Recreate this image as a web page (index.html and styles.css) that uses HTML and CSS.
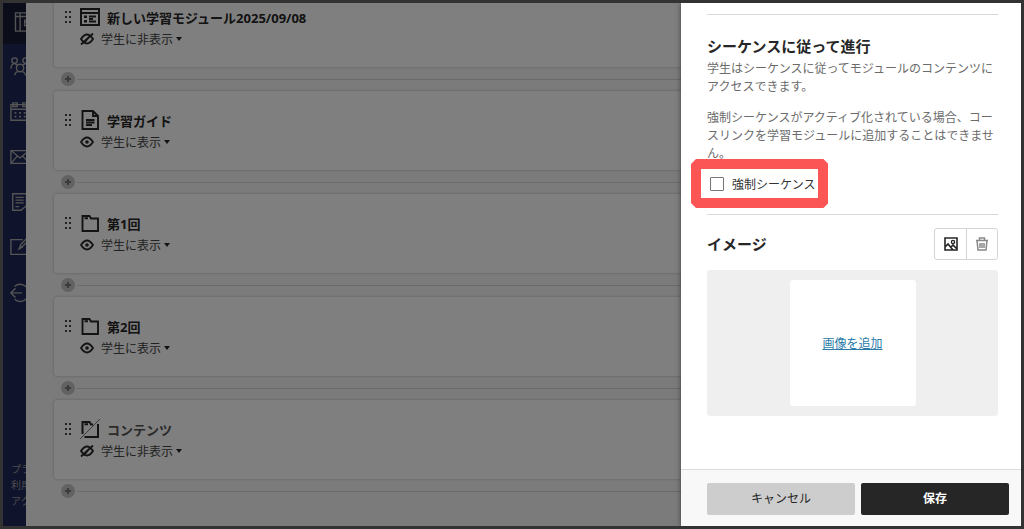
FILE: index.html
```html
<!DOCTYPE html>
<html lang="ja">
	<head>
		<meta charset="utf-8">
		<title>学習モジュール</title>
		<link rel="stylesheet" href="styles.css">
	</head>
	<body>
		<svg class="symbols" aria-hidden="true">
			<symbol id="drag" viewBox="0 0 8 14">
				<path d="M1 1h2v2H1zM5 1h2v2H5zM1 6h2v2H1zM5 6h2v2H5zM1 11h2v2H1zM5 11h2v2H5z" fill="currentColor"/>
			</symbol>
			<symbol id="module" viewBox="0 0 20 20">
				<path d="M1 2h18v16H1zM1 6h18M9 9.500h7M9 12h4M9 14.500h7" fill="none" stroke="currentColor" stroke-width="2"/>
				<path d="M4 8.500h3v2.500H4zM4 13h3v2.500H4z" fill="currentColor"/>
			</symbol>
			<symbol id="document" viewBox="0 0 20 20">
				<path d="M2.500 1h10.500l5 5v13H2.500zM13 1v5h5M6 10h8.500M6 12.500h8.500M6 15h6" fill="none" stroke="currentColor" stroke-width="1.900"/>
			</symbol>
			<symbol id="folder" viewBox="0 0 20 20">
				<path d="M2.500 18V3h7l1.500 2.500h7V18zM4.500 5.300h3.500" fill="none" stroke="currentColor" stroke-width="1.900"/>
			</symbol>
			<symbol id="folder-off" viewBox="0 0 20 20">
				<path d="M2.500 15V3h7l1.500 2.500h2M18 5v13H4.500M4.500 5.300h3.500" fill="none" stroke="currentColor" stroke-width="2"/>
				<path d="M0 20L20 0" stroke="currentColor" stroke-width="1" opacity=".6"/>
			</symbol>
			<symbol id="eye" viewBox="0 0 14 12">
				<path d="M1 6q6-9 12 0q-6 9-12 0z" fill="none" stroke="currentColor" stroke-width="1.800"/>
				<circle cx="7" cy="6" r="1.800" fill="currentColor"/>
			</symbol>
			<symbol id="eye-off" viewBox="0 0 14 12">
				<path d="M1 6q6-9 12 0q-6 9-12 0zM1 11.500L13 .5M5 9l4-5" fill="none" stroke="currentColor" stroke-width="1.900"/>
			</symbol>
		</svg>

		<div class="app">
			<nav class="sidebar">
				<a class="nav-item active" href="#" aria-label="コース">
					<svg viewBox="0 0 24 24"><path d="M6 2h18v20H6zM11 2v20M6 6h18M24 10h-8v6h8M16 12h3"/></svg>
				</a>
				<a class="nav-item" href="#" aria-label="グループ">
					<svg viewBox="0 0 24 24"><circle cx="5" cy="5" r="3"/><circle cx="17" cy="5" r="3"/><circle cx="11" cy="13" r="4"/><path d="M1 14q0-5 4-6l3 2M21 14q0-5-4-6l-3 2M5 21q1-4 4-4h4q3 0 4 4"/></svg>
				</a>
				<a class="nav-item" href="#" aria-label="カレンダー">
					<svg viewBox="0 0 24 24"><path d="M1 4h20v17H1zM1 9h20M3 2h5v4H3zM14 2h5v4h-5z"/><path d="M5 13h16M5 17h16" stroke-width="2" stroke-dasharray="2 3"/></svg>
				</a>
				<a class="nav-item" href="#" aria-label="メッセージ">
					<svg viewBox="0 0 24 24"><path d="M1 5h20v14H1zM1 5l10 8 10-8M1 19l7-8M21 19l-7-8"/></svg>
				</a>
				<a class="nav-item" href="#" aria-label="成績">
					<svg viewBox="0 0 24 24"><path d="M18 16V3H3v18h10M6 7h9M6 10h9M6 13h9M6 17h4M12 21l6-5"/></svg>
				</a>
				<a class="nav-item" href="#" aria-label="ツール">
					<svg viewBox="0 0 24 24"><path d="M14 4H1v16h18v-9M10 14l2-5 8-8 2 2-8 8zM10 14l4-2"/></svg>
				</a>
				<a class="nav-item" href="#" aria-label="サインアウト">
					<svg viewBox="0 0 24 24"><path d="M1 13h12M6 8l-5 5 5 5M5 6a9 9 0 0 1 15 6M5 20a9 9 0 0 0 15-6"/></svg>
				</a>
				<div class="nav-links">
					<a href="#">プラ</a>
					<a href="#">利用</a>
					<a href="#">アク</a>
				</div>
			</nav>

			<main class="content">
				<article class="card">
					<div class="card-head">
						<svg class="drag"><use href="#drag"/></svg>
						<svg class="type"><use href="#module"/></svg>
						<a class="card-title" href="#">新しい学習モジュール2025/09/08</a>
					</div>
					<button class="visibility" type="button"><svg><use href="#eye-off"/></svg>学生に非表示<span class="caret"></span></button>
				</article>
				<div class="insert"><button type="button" aria-label="追加"></button></div>

				<article class="card">
					<div class="card-head">
						<svg class="drag"><use href="#drag"/></svg>
						<svg class="type"><use href="#document"/></svg>
						<a class="card-title" href="#">学習ガイド</a>
					</div>
					<button class="visibility" type="button"><svg><use href="#eye"/></svg>学生に表示<span class="caret"></span></button>
				</article>
				<div class="insert"><button type="button" aria-label="追加"></button></div>

				<article class="card">
					<div class="card-head">
						<svg class="drag"><use href="#drag"/></svg>
						<svg class="type"><use href="#folder"/></svg>
						<a class="card-title" href="#">第1回</a>
					</div>
					<button class="visibility" type="button"><svg><use href="#eye"/></svg>学生に表示<span class="caret"></span></button>
				</article>
				<div class="insert"><button type="button" aria-label="追加"></button></div>

				<article class="card">
					<div class="card-head">
						<svg class="drag"><use href="#drag"/></svg>
						<svg class="type"><use href="#folder"/></svg>
						<a class="card-title" href="#">第2回</a>
					</div>
					<button class="visibility" type="button"><svg><use href="#eye"/></svg>学生に表示<span class="caret"></span></button>
				</article>
				<div class="insert"><button type="button" aria-label="追加"></button></div>

				<article class="card">
					<div class="card-head">
						<svg class="drag"><use href="#drag"/></svg>
						<svg class="type"><use href="#folder-off"/></svg>
						<a class="card-title muted" href="#">コンテンツ</a>
					</div>
					<button class="visibility" type="button"><svg><use href="#eye-off"/></svg>学生に非表示<span class="caret"></span></button>
				</article>
				<div class="insert"><button type="button" aria-label="追加"></button></div>
			</main>

			<div class="overlay"></div>

			<aside class="panel">
				<div class="panel-body">
					<section class="sequence">
						<h2>シーケンスに従って進行</h2>
						<p>学生はシーケンスに従ってモジュールのコンテンツにアクセスできます。</p>
						<p>強制シーケンスがアクティブ化されている場合、コースリンクを学習モジュールに追加することはできません。</p>
						<div class="check">
							<input type="checkbox" id="forced">
							<label for="forced">強制シーケンス</label>
							<span class="marker"></span>
						</div>
					</section>
					<section class="image">
						<div class="image-head">
							<h2>イメージ</h2>
							<div class="tools">
								<button type="button" aria-label="画像を編集">
									<svg viewBox="0 0 14 14"><path d="M1 1h12v12H1zM1 10l3-3 5 6M7 10l2-2 4 4" fill="none" stroke="currentColor" stroke-width="1.600"/><circle cx="9" cy="5" r="1.600" fill="none" stroke="currentColor" stroke-width="1.400"/></svg>
								</button>
								<button class="disabled" type="button" aria-label="画像を削除">
									<svg viewBox="0 0 14 14"><path d="M1 3.500h12M4.500 3V1h5v2M2 3.500L3 13h8l1-9.500M5 6v5M7 6v5M9 6v5" fill="none" stroke="currentColor" stroke-width="1.500"/></svg>
								</button>
							</div>
						</div>
						<div class="preview">
							<div class="drop"><a href="#">画像を追加</a></div>
						</div>
					</section>
				</div>
				<footer class="panel-foot">
					<button class="cancel" type="button">キャンセル</button>
					<button class="save" type="button">保存</button>
				</footer>
			</aside>
		</div>
	</body>
</html>
```
FILE: styles.css
```css
*{
	box-sizing: border-box;
}
body{
	margin: 0;
	font-family: "Open Sans", "Noto Sans CJK JP", sans-serif;
	font-size: 12px;
	color: #262626;
}
button{
	padding: 0;
	border: 0;
	background: none;
	font: inherit;
	color: inherit;
	cursor: pointer;
}
.symbols{
	display: none;
}
.app{
	position: relative;
	display: flex;
	height: 100vh;
	border: 3px solid #333;
	overflow: hidden;
}

/* navigation */
.sidebar{
	display: flex;
	flex-direction: column;
	flex: none;
	width: 23px;
	margin-top: -4px;
	background: #1e2656;
	overflow: hidden;
}
.nav-item{
	display: flex;
	align-items: center;
	flex: none;
	height: 45px;
	padding-left: 7px;
	color: #a8a8a8;
}
.nav-item svg{
	flex: none;
	width: 22px;
	height: 22px;
	fill: none;
	stroke: currentColor;
	stroke-width: 1.5;
}
.nav-item.active{
	background: #171b36;
}
.nav-links{
	margin-top: auto;
	padding: 0 0 17px 8px;
	font-size: 10px;
	line-height: 16px;
}
.nav-links a{
	display: block;
	color: #999;
	text-decoration: none;
	white-space: nowrap;
}

/* course content */
.content{
	flex: 1;
	margin-top: -15px;
	padding-left: 28px;
	background: #f7f7f7;
}
.card{
	height: 79px;
	padding: 18px 0 0 10px;
	border-radius: 3px;
	background: #fff;
	box-shadow: 0 0 3px rgba(0,0,0,.25);
}
.card-head{
	display: flex;
	align-items: center;
	height: 22px;
}
.drag{
	width: 8px;
	height: 14px;
	color: #444;
}
.type{
	width: 20px;
	height: 20px;
	margin: 0 7px 0 8px;
}
.card-title{
	font-size: 13px;
	font-weight: 700;
	color: inherit;
	text-decoration: none;
}
.card-title.muted{
	color: #555;
}
.visibility{
	display: flex;
	align-items: center;
	height: 21px;
	margin-left: 16px;
	color: #444;
}
.visibility svg{
	width: 14px;
	height: 12px;
	margin-right: 7px;
	color: #262626;
}
.caret{
	margin-left: 3px;
	border: 3px solid transparent;
	border-top: 4px solid #262626;
	border-bottom: 0;
}
.insert{
	display: flex;
	align-items: center;
	height: 24px;
	padding-left: 7px;
}
.insert::after{
	content: "";
	flex: 1;
	height: 1px;
	margin-left: 2px;
	background: #d4d4d4;
}
.insert button{
	width: 14px;
	height: 14px;
	border-radius: 50%;
	background:
		linear-gradient(#777, #777) center / 6px 2px no-repeat,
		linear-gradient(#777, #777) center / 2px 6px no-repeat,
		#c4c4c4;
}
.overlay{
	position: absolute;
	inset: 0;
	background: rgba(0,0,0,.5);
}

/* settings panel */
.panel{
	position: absolute;
	top: 0;
	right: 0;
	bottom: 0;
	display: flex;
	flex-direction: column;
	width: 340px;
	background: #fff;
	box-shadow: 0 0 5px rgba(0,0,0,.5);
}
.panel-body{
	flex: 1;
	padding: 11px 23px 0 26px;
}
.panel h2{
	margin: 0;
	font-size: 15px;
	line-height: 24px;
}
.sequence{
	padding: 19px 0 22px;
	border-top: 1px solid #d9d9d9;
	border-bottom: 1px solid #d9d9d9;
}
.sequence p{
	margin: 0 0 13px;
	line-height: 18px;
	color: #6b6b6b;
}
.panel .sequence h2{
	margin-bottom: 2px;
}
.check{
	position: relative;
	display: flex;
	align-items: center;
	gap: 8px;
	width: max-content;
	height: 16px;
	padding-left: 3px;
}
.check label{
	color: #333;
}
.check input{
	appearance: none;
	width: 14px;
	height: 14px;
	margin: 0;
	border: 1px solid #777;
	border-radius: 1px;
	background: #fff;
}
.marker{
	position: absolute;
	inset: -17px -13px -16px -16px;
	border: 10px solid #fb5555;
	clip-path: polygon(5px 0, calc(100% - 5px) 0, 100% 5px, 100% calc(100% - 5px), calc(100% - 5px) 100%, 5px 100%, 0 calc(100% - 5px), 0 5px);
	pointer-events: none;
}
.image-head{
	display: flex;
	align-items: center;
	justify-content: space-between;
	padding: 13px 0 10px;
}
.tools{
	display: flex;
	border: 1px solid #d4d4d4;
	border-radius: 3px;
}
.tools button{
	display: flex;
	align-items: center;
	justify-content: center;
	width: 31px;
	height: 30px;
}
.tools svg{
	width: 14px;
	height: 14px;
}
.tools .disabled{
	border-left: 1px solid #d4d4d4;
	color: #888;
}
.preview{
	display: flex;
	justify-content: center;
	padding: 10px;
	border-radius: 3px;
	background: #efefef;
}
.drop{
	display: flex;
	align-items: center;
	justify-content: center;
	width: 126px;
	height: 126px;
	border-radius: 3px;
	background: #fff;
}
.drop a{
	color: #2a7ba8;
}
.panel-foot{
	display: flex;
	gap: 6px;
	padding: 13px 12px 11px 26px;
	border-top: 1px solid #dcdcdc;
	background: #f8f8f8;
}
.panel-foot button{
	flex: 1;
	height: 32px;
	padding-bottom: 2px;
	border-radius: 2px;
}
.panel-foot .cancel{
	background: #cdcdcd;
}
.panel-foot .save{
	background: #262626;
	font-weight: 700;
	color: #fff;
}
```
